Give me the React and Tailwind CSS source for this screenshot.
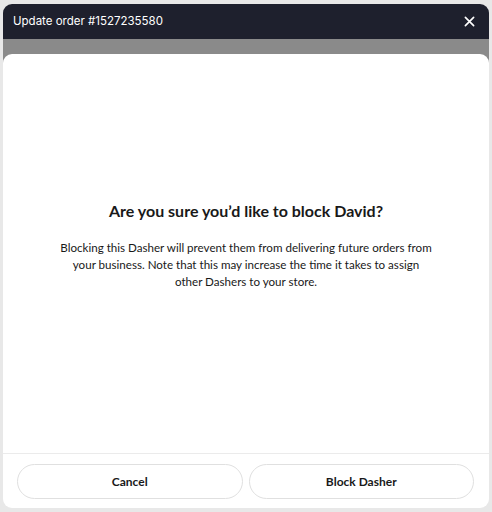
export default function App() {
  return (
    <div className="w-[492px] h-[512px] bg-[#e8e8e8] pt-[4px] px-[3px] flex flex-col" style={{ fontFamily: "Inter, 'Liberation Sans', sans-serif" }}>
      <div className="h-[35px] shrink-0 bg-[#1e202d] rounded-t-[9px] flex items-center justify-between pl-[10px] pr-[14px]">
        <span className="text-white text-[11.5px] leading-none">Update order #1527235580</span>
        <svg width="11" height="11" viewBox="0 0 12 12" fill="none" stroke="white" strokeWidth="1.8" strokeLinecap="round">
          <path d="M1.5 1.5L10.5 10.5M10.5 1.5L1.5 10.5" />
        </svg>
      </div>
      <div className="bg-[linear-gradient(#8a8a8a_0_30px,transparent_30px)] pt-[15px]">
        <div className="bg-white rounded-[9px] h-[454px] flex flex-col" style={{ fontFamily: "Lato, 'Liberation Sans', sans-serif" }}>
          <div className="flex-1 flex flex-col items-center pt-[145px]">
            <h1 className="text-[16px] leading-[24px] font-bold text-[#191919]">Are you sure you’d like to block David?</h1>
            <p className="mt-[16px] w-[420px] text-center text-[11.6px] leading-[17px] text-[#191919]">
              Blocking this Dasher will prevent them from delivering future orders from
              <br />
              your business. Note that this may increase the time it takes to assign
              <br />
              other Dashers to your store.
            </p>
          </div>
          <div className="border-t border-[#ebebeb] flex gap-[6px] pl-[14px] pr-[15px] pt-[10px] pb-[9px]">
            <button className="flex-1 h-[35px] rounded-full border border-[#e0e0e0] bg-white text-[12px] font-bold text-[#191919]">Cancel</button>
            <button className="flex-1 h-[35px] rounded-full border border-[#e0e0e0] bg-white text-[12px] font-bold text-[#191919]">Block Dasher</button>
          </div>
        </div>
      </div>
    </div>
  );
}
